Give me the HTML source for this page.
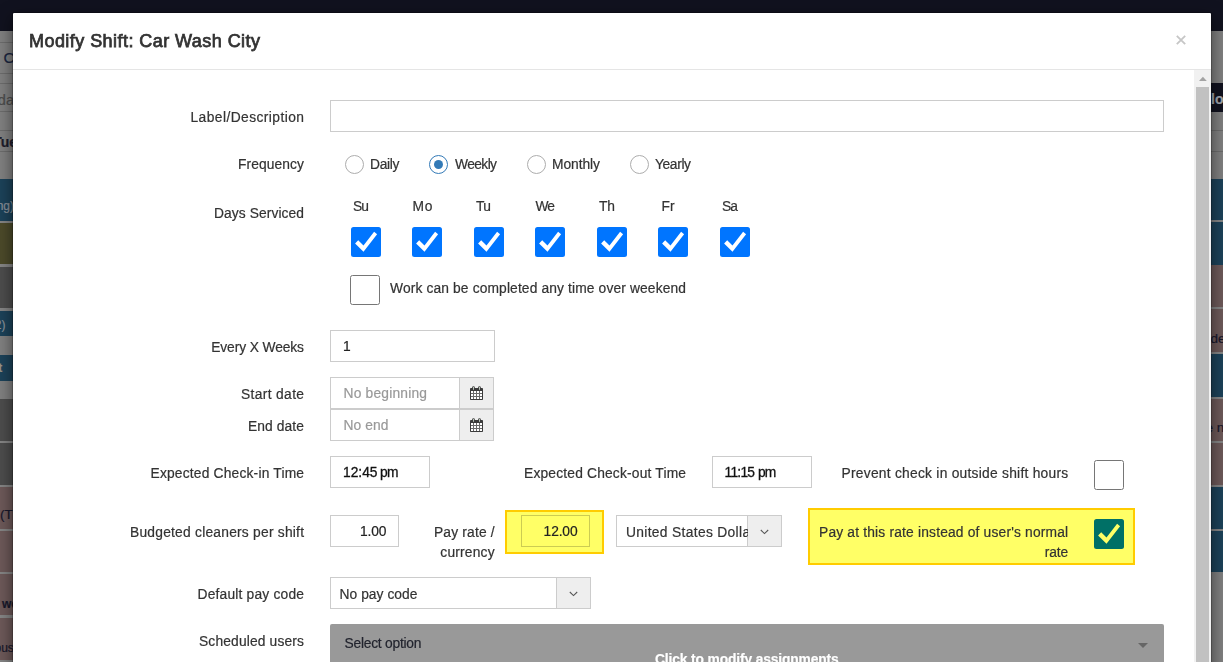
<!DOCTYPE html>
<html lang="en">
<head>
<meta charset="utf-8">
<title>Modify Shift: Car Wash City</title>
<style>
html,body{margin:0;padding:0;}
body{width:1223px;height:662px;overflow:hidden;position:relative;background:#7f7f7f;font-family:"Liberation Sans",sans-serif;font-size:14px;color:#333;}
.a{position:absolute;box-sizing:border-box;}
.t{position:absolute;white-space:pre;line-height:20px;font-family:"Liberation Sans",sans-serif;-webkit-text-stroke:0.2px currentColor;}
.inp{position:absolute;box-sizing:border-box;background:#fff;border:1px solid #ccc;}
.addon{position:absolute;box-sizing:border-box;background:#eee;border:1px solid #ccc;}
.cb{position:absolute;box-sizing:border-box;width:30px;height:30px;border-radius:2.5px;}
.cb.on{background:#0075ff;}
.cb.off{background:#fff;border:1px solid #767676;}
.cb svg{position:absolute;left:0;top:0;}
.radio{position:absolute;box-sizing:border-box;width:19px;height:19px;border-radius:50%;border:1px solid #adadad;background:#fff;}
.radio.on{border-color:#337ab7;}
.radio.on::after{content:"";position:absolute;left:4px;top:4px;width:9px;height:9px;border-radius:50%;background:#337ab7;}
.hl{position:absolute;box-sizing:border-box;background:#ffff66;border:2px solid #ffcc00;}
</style>
</head>
<body>
<div class="a" style="left:0;top:0;width:1223px;height:31px;background:#11121f;"></div>
<div class="a" style="left:0;top:31px;width:20px;height:148px;background:#808080;"></div>
<div class="a" style="left:0;top:179px;width:20px;height:42px;background:#1c4259;"></div>
<div class="a" style="left:0;top:221px;width:20px;height:2px;background:#858585;"></div>
<div class="a" style="left:0;top:223px;width:20px;height:41px;background:#4c4a2a;"></div>
<div class="a" style="left:0;top:264px;width:20px;height:3px;background:#858585;"></div>
<div class="a" style="left:0;top:267px;width:20px;height:41px;background:#4d4d4d;"></div>
<div class="a" style="left:0;top:308px;width:20px;height:3px;background:#858585;"></div>
<div class="a" style="left:0;top:311px;width:20px;height:25px;background:#1c4259;"></div>
<div class="a" style="left:0;top:336px;width:20px;height:19px;background:#808080;"></div>
<div class="a" style="left:0;top:355px;width:20px;height:26px;background:#1c4259;"></div>
<div class="a" style="left:0;top:381px;width:20px;height:18px;background:#808080;"></div>
<div class="a" style="left:0;top:399px;width:20px;height:42px;background:#4d4d4d;"></div>
<div class="a" style="left:0;top:441px;width:20px;height:2px;background:#858585;"></div>
<div class="a" style="left:0;top:443px;width:20px;height:42px;background:#4d4d4d;"></div>
<div class="a" style="left:0;top:485px;width:20px;height:2px;background:#858585;"></div>
<div class="a" style="left:0;top:487px;width:20px;height:42px;background:#6d5959;"></div>
<div class="a" style="left:0;top:529px;width:20px;height:2px;background:#858585;"></div>
<div class="a" style="left:0;top:531px;width:20px;height:41px;background:#6d5959;"></div>
<div class="a" style="left:0;top:572px;width:20px;height:2px;background:#858585;"></div>
<div class="a" style="left:0;top:574px;width:20px;height:41px;background:#6d5959;"></div>
<div class="a" style="left:0;top:615px;width:20px;height:3px;background:#858585;"></div>
<div class="a" style="left:0;top:618px;width:20px;height:42px;background:#6d5959;"></div>
<div class="a" style="left:0;top:660px;width:20px;height:2px;background:#858585;"></div>
<div class="a" style="left:1205px;top:31px;width:18px;height:52px;background:#808080;"></div>
<div class="a" style="left:1205px;top:83px;width:18px;height:29px;background:#11121f;"></div>
<div class="a" style="left:1205px;top:112px;width:18px;height:67px;background:#808080;"></div>
<div class="a" style="left:1205px;top:179px;width:18px;height:41px;background:#1c4259;"></div>
<div class="a" style="left:1205px;top:220px;width:18px;height:2px;background:#858585;"></div>
<div class="a" style="left:1205px;top:222px;width:18px;height:43px;background:#1c4259;"></div>
<div class="a" style="left:1205px;top:265px;width:18px;height:42px;background:#6d5959;"></div>
<div class="a" style="left:1205px;top:307px;width:18px;height:2px;background:#858585;"></div>
<div class="a" style="left:1205px;top:309px;width:18px;height:43px;background:#6d5959;"></div>
<div class="a" style="left:1205px;top:352px;width:18px;height:2px;background:#858585;"></div>
<div class="a" style="left:1205px;top:354px;width:18px;height:43px;background:#1c4259;"></div>
<div class="a" style="left:1205px;top:397px;width:18px;height:2px;background:#858585;"></div>
<div class="a" style="left:1205px;top:399px;width:18px;height:42px;background:#6d5959;"></div>
<div class="a" style="left:1205px;top:441px;width:18px;height:2px;background:#858585;"></div>
<div class="a" style="left:1205px;top:443px;width:18px;height:42px;background:#6d5959;"></div>
<div class="a" style="left:1205px;top:485px;width:18px;height:2px;background:#858585;"></div>
<div class="a" style="left:1205px;top:487px;width:18px;height:42px;background:#1c4259;"></div>
<div class="a" style="left:1205px;top:529px;width:18px;height:2px;background:#858585;"></div>
<div class="a" style="left:1205px;top:531px;width:18px;height:41px;background:#1c4259;"></div>
<div class="a" style="left:1205px;top:572px;width:18px;height:90px;background:#808080;"></div>
<div class="a" style="left:0;top:42px;width:20px;height:1px;background:#6c6c6c;"></div>
<div class="a" style="left:0;top:73px;width:20px;height:1px;background:#6c6c6c;"></div>
<div class="a" style="left:0;top:83px;width:20px;height:1px;background:#6c6c6c;"></div>
<div class="a" style="left:0;top:111px;width:20px;height:1px;background:#6c6c6c;"></div>
<div class="a" style="left:0;top:130px;width:20px;height:1px;background:#6c6c6c;"></div>
<div class="a" style="left:0;top:151px;width:20px;height:1px;background:#6c6c6c;"></div>
<div class="a" style="left:1205px;top:130px;width:18px;height:1px;background:#6c6c6c;"></div>
<div class="a" style="left:1205px;top:151px;width:18px;height:1px;background:#6c6c6c;"></div>
<span class="t" style="left:3.5px;top:50px;font-size:15.5px;color:#1a2540;line-height:16px;-webkit-text-stroke:0.2px currentColor;">C</span>
<span class="t" style="right:1209px;top:92px;font-size:14.5px;color:#4c4c4c;line-height:16px;-webkit-text-stroke:0.2px currentColor;">da</span>
<span class="t" style="right:1206px;top:134px;font-size:14px;color:#1d1d2b;font-weight:700;line-height:16px;-webkit-text-stroke:0.2px currentColor;">Tue</span>
<span class="t" style="right:1209px;top:198px;font-size:12px;color:#8b9199;line-height:16px;-webkit-text-stroke:0.2px currentColor;">ng)</span>
<span class="t" style="right:1217.5px;top:317px;font-size:12px;color:#8b9199;line-height:16px;-webkit-text-stroke:0.2px currentColor;">2)</span>
<span class="t" style="right:1220.8px;top:360px;font-size:12px;color:#9a9488;font-weight:700;line-height:16px;-webkit-text-stroke:0.2px currentColor;">t</span>
<span class="t" style="left:0px;top:507px;font-size:13.5px;color:#17172a;line-height:16px;-webkit-text-stroke:0.2px currentColor;">(TI</span>
<span class="t" style="left:2px;top:596px;font-size:12px;color:#17172a;font-weight:700;line-height:16px;-webkit-text-stroke:0.2px currentColor;">wo</span>
<span class="t" style="right:1209.2px;top:640px;font-size:12px;color:#17172a;line-height:16px;-webkit-text-stroke:0.2px currentColor;">ous</span>
<span class="t" style="left:1211px;top:90.5px;font-size:14px;color:#a0a6ae;font-weight:700;line-height:16px;-webkit-text-stroke:0.2px currentColor;">lo</span>
<span class="t" style="left:1210.5px;top:331px;font-size:13.5px;color:#17172a;line-height:16px;-webkit-text-stroke:0.2px currentColor;">de</span>
<span class="t" style="left:1205.5px;top:420px;font-size:13.5px;color:#17172a;line-height:16px;-webkit-text-stroke:0.2px currentColor;">e n</span>
<div class="a" id="modal" style="left:12px;top:12px;width:1200px;height:700px;background:#fff;background-clip:padding-box;border:1px solid rgba(0,0,0,.2);border-radius:2px;box-shadow:0 5px 15px rgba(0,0,0,.5);"></div>
<div class="a" style="left:13px;top:69px;width:1198px;height:1px;background:#e5e5e5;"></div>
<!-- close -->
<svg class="a" style="left:1176px;top:34.6px;" width="10" height="10" viewBox="0 0 10 10"><path d="M0.8 0.8L9.2 9.2M9.2 0.8L0.8 9.2" stroke="#c6c6c6" stroke-width="1.8" fill="none"/></svg>
<!-- scrollbar -->
<div class="a" style="left:1194px;top:70px;width:17px;height:600px;background:#f1f1f1;"></div>
<div class="a" style="left:1196px;top:87px;width:13px;height:600px;background:#c1c1c1;"></div>
<svg class="a" style="left:1198.5px;top:76px;" width="8" height="6" viewBox="0 0 8 6"><path d="M0 5L3.9 0.8L7.8 5Z" fill="#a3a3a3"/></svg>

<!-- inputs -->
<div class="inp" style="left:330px;top:100px;width:834px;height:32px;"></div>
<div class="inp" style="left:330px;top:330px;width:165px;height:32px;"></div>
<div class="inp" style="left:330px;top:377px;width:130px;height:32px;"></div>
<div class="addon" style="left:459px;top:377px;width:35px;height:32px;"></div>
<div class="inp" style="left:330px;top:409px;width:130px;height:32px;"></div>
<div class="addon" style="left:459px;top:409px;width:35px;height:32px;"></div>
<div class="inp" style="left:330px;top:456px;width:100px;height:32px;"></div>
<div class="inp" style="left:712px;top:456px;width:100px;height:32px;"></div>
<div class="inp" style="left:330px;top:515px;width:69px;height:32px;"></div>
<div class="hl" style="left:505px;top:510px;width:99px;height:44px;"></div>
<div class="inp" style="left:521px;top:515px;width:69px;height:32px;background:#ffff66;border-color:#cccc52;"></div>
<div class="inp" style="left:616px;top:515px;width:166px;height:32px;"></div>
<div class="addon" style="left:747px;top:515px;width:35px;height:32px;"></div>
<div class="inp" style="left:330px;top:577px;width:261px;height:32px;"></div>
<div class="addon" style="left:556px;top:577px;width:35px;height:32px;"></div>
<div class="hl" style="left:808px;top:508px;width:327px;height:57px;"></div>
<!-- scheduled users -->
<div class="a" style="left:330px;top:624px;width:834px;height:60px;background:#999;border-radius:2px 2px 0 0;"></div>
<svg class="a" style="left:1138px;top:643px;" width="10" height="5" viewBox="0 0 10 5"><path d="M0 0H10L5 5Z" fill="#666"/></svg>

<!-- chevrons -->
<svg class="a" style="left:760px;top:529px;" width="9" height="6" viewBox="0 0 9 6"><path d="M0.8 1L4.5 4.6L8.2 1" stroke="#555" stroke-width="1.05" fill="none"/></svg>
<svg class="a" style="left:568.5px;top:591px;" width="9" height="6" viewBox="0 0 9 6"><path d="M0.8 1L4.5 4.6L8.2 1" stroke="#555" stroke-width="1.05" fill="none"/></svg>

<!-- calendar icons -->
<svg class="a" style="left:470px;top:386px;" width="13" height="14" viewBox="0 0 13 14"><rect x="0" y="2" width="13" height="12" rx="0.8" fill="#3b3b3b"/><rect x="1" y="5" width="11" height="8" fill="#6a6a6a"/><rect x="1" y="5" width="2" height="2" fill="#fff"/><rect x="1" y="8" width="2" height="2" fill="#fff"/><rect x="1" y="11" width="2" height="2" fill="#fff"/><rect x="4" y="5" width="2" height="2" fill="#fff"/><rect x="4" y="8" width="2" height="2" fill="#fff"/><rect x="4" y="11" width="2" height="2" fill="#fff"/><rect x="7" y="5" width="2" height="2" fill="#fff"/><rect x="7" y="8" width="2" height="2" fill="#fff"/><rect x="7" y="11" width="2" height="2" fill="#fff"/><rect x="10" y="5" width="2" height="2" fill="#fff"/><rect x="10" y="8" width="2" height="2" fill="#fff"/><rect x="10" y="11" width="2" height="2" fill="#fff"/><rect x="2.2" y="0.2" width="2.6" height="4.1" rx="1.2" fill="#3b3b3b"/><rect x="3.1" y="0.9" width="0.8" height="2.9" fill="#dbe9db"/><rect x="8.2" y="0.2" width="2.6" height="4.1" rx="1.2" fill="#3b3b3b"/><rect x="9.1" y="0.9" width="0.8" height="2.9" fill="#dbe9db"/></svg>
<svg class="a" style="left:470px;top:418px;" width="13" height="14" viewBox="0 0 13 14"><rect x="0" y="2" width="13" height="12" rx="0.8" fill="#3b3b3b"/><rect x="1" y="5" width="11" height="8" fill="#6a6a6a"/><rect x="1" y="5" width="2" height="2" fill="#fff"/><rect x="1" y="8" width="2" height="2" fill="#fff"/><rect x="1" y="11" width="2" height="2" fill="#fff"/><rect x="4" y="5" width="2" height="2" fill="#fff"/><rect x="4" y="8" width="2" height="2" fill="#fff"/><rect x="4" y="11" width="2" height="2" fill="#fff"/><rect x="7" y="5" width="2" height="2" fill="#fff"/><rect x="7" y="8" width="2" height="2" fill="#fff"/><rect x="7" y="11" width="2" height="2" fill="#fff"/><rect x="10" y="5" width="2" height="2" fill="#fff"/><rect x="10" y="8" width="2" height="2" fill="#fff"/><rect x="10" y="11" width="2" height="2" fill="#fff"/><rect x="2.2" y="0.2" width="2.6" height="4.1" rx="1.2" fill="#3b3b3b"/><rect x="3.1" y="0.9" width="0.8" height="2.9" fill="#dbe9db"/><rect x="8.2" y="0.2" width="2.6" height="4.1" rx="1.2" fill="#3b3b3b"/><rect x="9.1" y="0.9" width="0.8" height="2.9" fill="#dbe9db"/></svg>

<!-- radios -->
<div class="radio" style="left:344.5px;top:154.5px;"></div>
<div class="radio on" style="left:429px;top:154.5px;"></div>
<div class="radio" style="left:526.5px;top:154.5px;"></div>
<div class="radio" style="left:630px;top:154.5px;"></div>

<!-- checkboxes -->
<div class="cb on" style="left:351px;top:227px;"><svg width="30" height="30" viewBox="0 0 30 30"><path d="M23.1 4.8L26.1 7.2L12.5 24.8L4.1 16.6L7.2 13.3L12.5 18.6Z" fill="#fff"/></svg></div>
<div class="cb on" style="left:412.4px;top:227px;"><svg width="30" height="30" viewBox="0 0 30 30"><path d="M23.1 4.8L26.1 7.2L12.5 24.8L4.1 16.6L7.2 13.3L12.5 18.6Z" fill="#fff"/></svg></div>
<div class="cb on" style="left:474px;top:227px;"><svg width="30" height="30" viewBox="0 0 30 30"><path d="M23.1 4.8L26.1 7.2L12.5 24.8L4.1 16.6L7.2 13.3L12.5 18.6Z" fill="#fff"/></svg></div>
<div class="cb on" style="left:535.4px;top:227px;"><svg width="30" height="30" viewBox="0 0 30 30"><path d="M23.1 4.8L26.1 7.2L12.5 24.8L4.1 16.6L7.2 13.3L12.5 18.6Z" fill="#fff"/></svg></div>
<div class="cb on" style="left:597px;top:227px;"><svg width="30" height="30" viewBox="0 0 30 30"><path d="M23.1 4.8L26.1 7.2L12.5 24.8L4.1 16.6L7.2 13.3L12.5 18.6Z" fill="#fff"/></svg></div>
<div class="cb on" style="left:658.4px;top:227px;"><svg width="30" height="30" viewBox="0 0 30 30"><path d="M23.1 4.8L26.1 7.2L12.5 24.8L4.1 16.6L7.2 13.3L12.5 18.6Z" fill="#fff"/></svg></div>
<div class="cb on" style="left:720px;top:227px;"><svg width="30" height="30" viewBox="0 0 30 30"><path d="M23.1 4.8L26.1 7.2L12.5 24.8L4.1 16.6L7.2 13.3L12.5 18.6Z" fill="#fff"/></svg></div>
<div class="cb off" style="left:350px;top:275px;"></div>
<div class="cb off" style="left:1094px;top:460px;"></div>
<div class="cb on" style="left:1094px;top:519px;background:#007066;"><svg width="30" height="30" viewBox="0 0 30 30"><path d="M23.1 4.8L26.1 7.2L12.5 24.8L4.1 16.6L7.2 13.3L12.5 18.6Z" fill="#ffff66"/></svg></div>

<!-- text -->
<div class="a" style="left:0;top:0;width:1223px;height:662px;will-change:transform;">
<span class="t" style="left:29.00px;top:31.00px;font-size:18px;color:#333;letter-spacing:0.447px;-webkit-text-stroke:0.75px #333;">Modify Shift: Car Wash City</span>
<span class="t" style="left:190.50px;top:108.00px;font-size:13.8px;color:#333;letter-spacing:0.431px;">Label/Description</span>
<span class="t" style="left:238.00px;top:155.00px;font-size:13.8px;color:#333;letter-spacing:0.102px;">Frequency</span>
<span class="t" style="left:214.00px;top:204.00px;font-size:13.8px;color:#333;letter-spacing:0.087px;">Days Serviced</span>
<span class="t" style="left:211.20px;top:338.00px;font-size:13.8px;color:#333;letter-spacing:-0.105px;">Every X Weeks</span>
<span class="t" style="left:241.00px;top:385.00px;font-size:13.8px;color:#333;letter-spacing:0.352px;">Start date</span>
<span class="t" style="left:248.00px;top:417.00px;font-size:13.8px;color:#333;letter-spacing:0.107px;">End date</span>
<span class="t" style="left:150.50px;top:464.00px;font-size:13.8px;color:#333;letter-spacing:0.189px;">Expected Check-in Time</span>
<span class="t" style="left:130.00px;top:523.00px;font-size:13.8px;color:#333;letter-spacing:0.232px;">Budgeted cleaners per shift</span>
<span class="t" style="left:197.50px;top:585.00px;font-size:13.8px;color:#333;letter-spacing:0.197px;">Default pay code</span>
<span class="t" style="left:199.00px;top:632.00px;font-size:13.8px;color:#333;letter-spacing:0.158px;">Scheduled users</span>
<span class="t" style="left:370.00px;top:155.00px;font-size:13.8px;color:#333;letter-spacing:-0.293px;">Daily</span>
<span class="t" style="left:455.00px;top:155.00px;font-size:13.8px;color:#333;letter-spacing:-0.597px;">Weekly</span>
<span class="t" style="left:552.00px;top:155.00px;font-size:13.8px;color:#333;letter-spacing:-0.052px;">Monthly</span>
<span class="t" style="left:655.00px;top:155.00px;font-size:13.8px;color:#333;letter-spacing:-0.369px;">Yearly</span>
<span class="t" style="left:353.00px;top:197.00px;font-size:13.8px;color:#333;letter-spacing:-0.891px;">Su</span>
<span class="t" style="left:412.50px;top:197.00px;font-size:13.8px;color:#333;letter-spacing:0.828px;">Mo</span>
<span class="t" style="left:476.00px;top:197.00px;font-size:13.8px;color:#333;letter-spacing:-0.594px;">Tu</span>
<span class="t" style="left:535.50px;top:197.00px;font-size:13.8px;color:#333;letter-spacing:-0.953px;">We</span>
<span class="t" style="left:599.00px;top:197.00px;font-size:13.8px;color:#333;letter-spacing:-0.109px;">Th</span>
<span class="t" style="left:661.50px;top:197.00px;font-size:13.8px;color:#333;letter-spacing:-0.031px;">Fr</span>
<span class="t" style="left:722.00px;top:197.00px;font-size:13.8px;color:#333;letter-spacing:-0.891px;">Sa</span>
<span class="t" style="left:390.00px;top:279.00px;font-size:13.8px;color:#333;letter-spacing:0.133px;">Work can be completed any time over weekend</span>
<span class="t" style="left:343.00px;top:337.00px;font-size:13.8px;color:#222;">1</span>
<span class="t" style="left:343.50px;top:384.00px;font-size:13.8px;color:#999;letter-spacing:0.197px;">No beginning</span>
<span class="t" style="left:343.50px;top:416.00px;font-size:13.8px;color:#999;letter-spacing:0.100px;">No end</span>
<span class="t" style="left:343.00px;top:463.00px;font-size:13.8px;color:#111;letter-spacing:-0.008px;-webkit-text-stroke:0.3px #111;">12:45</span>
<span class="t" style="left:380.00px;top:463.00px;font-size:13.8px;color:#111;letter-spacing:-0.672px;-webkit-text-stroke:0.3px #111;">pm</span>
<span class="t" style="left:524.00px;top:464.00px;font-size:13.8px;color:#333;letter-spacing:0.183px;">Expected Check-out Time</span>
<span class="t" style="left:724.50px;top:463.00px;font-size:13.8px;color:#111;letter-spacing:-0.754px;-webkit-text-stroke:0.3px #111;">11:15</span>
<span class="t" style="left:758.00px;top:463.00px;font-size:13.8px;color:#111;letter-spacing:-0.872px;-webkit-text-stroke:0.3px #111;">pm</span>
<span class="t" style="left:841.50px;top:464.00px;font-size:13.8px;color:#333;letter-spacing:0.254px;">Prevent check in outside shift hours</span>
<span class="t" style="left:360.00px;top:522.00px;font-size:13.8px;color:#222;letter-spacing:-0.120px;">1.00</span>
<span class="t" style="left:434.00px;top:523.00px;font-size:13.8px;color:#333;letter-spacing:0.171px;">Pay rate /</span>
<span class="t" style="left:440.30px;top:543.00px;font-size:13.8px;color:#333;letter-spacing:0.199px;">currency</span>
<span class="t" style="left:543.60px;top:522.00px;font-size:13.8px;color:#222;letter-spacing:-0.133px;">12.00</span>
<span class="t" style="left:626.00px;top:523.00px;font-size:13.8px;color:#333;letter-spacing:0.331px;width:121.5px;overflow:hidden;">United States Dollar</span>
<span class="t" style="left:339.50px;top:585.00px;font-size:13.8px;color:#333;letter-spacing:0.053px;">No pay code</span>
<span class="t" style="left:819.00px;top:523.00px;font-size:13.8px;color:#333;letter-spacing:0.182px;">Pay at this rate instead of user's normal</span>
<span class="t" style="left:1044.70px;top:543.00px;font-size:13.8px;color:#333;letter-spacing:-0.094px;">rate</span>
<span class="t" style="left:344.50px;top:634.00px;font-size:13.8px;color:#22242e;letter-spacing:-0.232px;">Select option</span>
<span class="t" style="left:655.00px;top:650.00px;font-size:13.8px;color:#fff;font-weight:700;letter-spacing:-0.130px;">Click to modify assignments</span>
</div>
</body>
</html>
